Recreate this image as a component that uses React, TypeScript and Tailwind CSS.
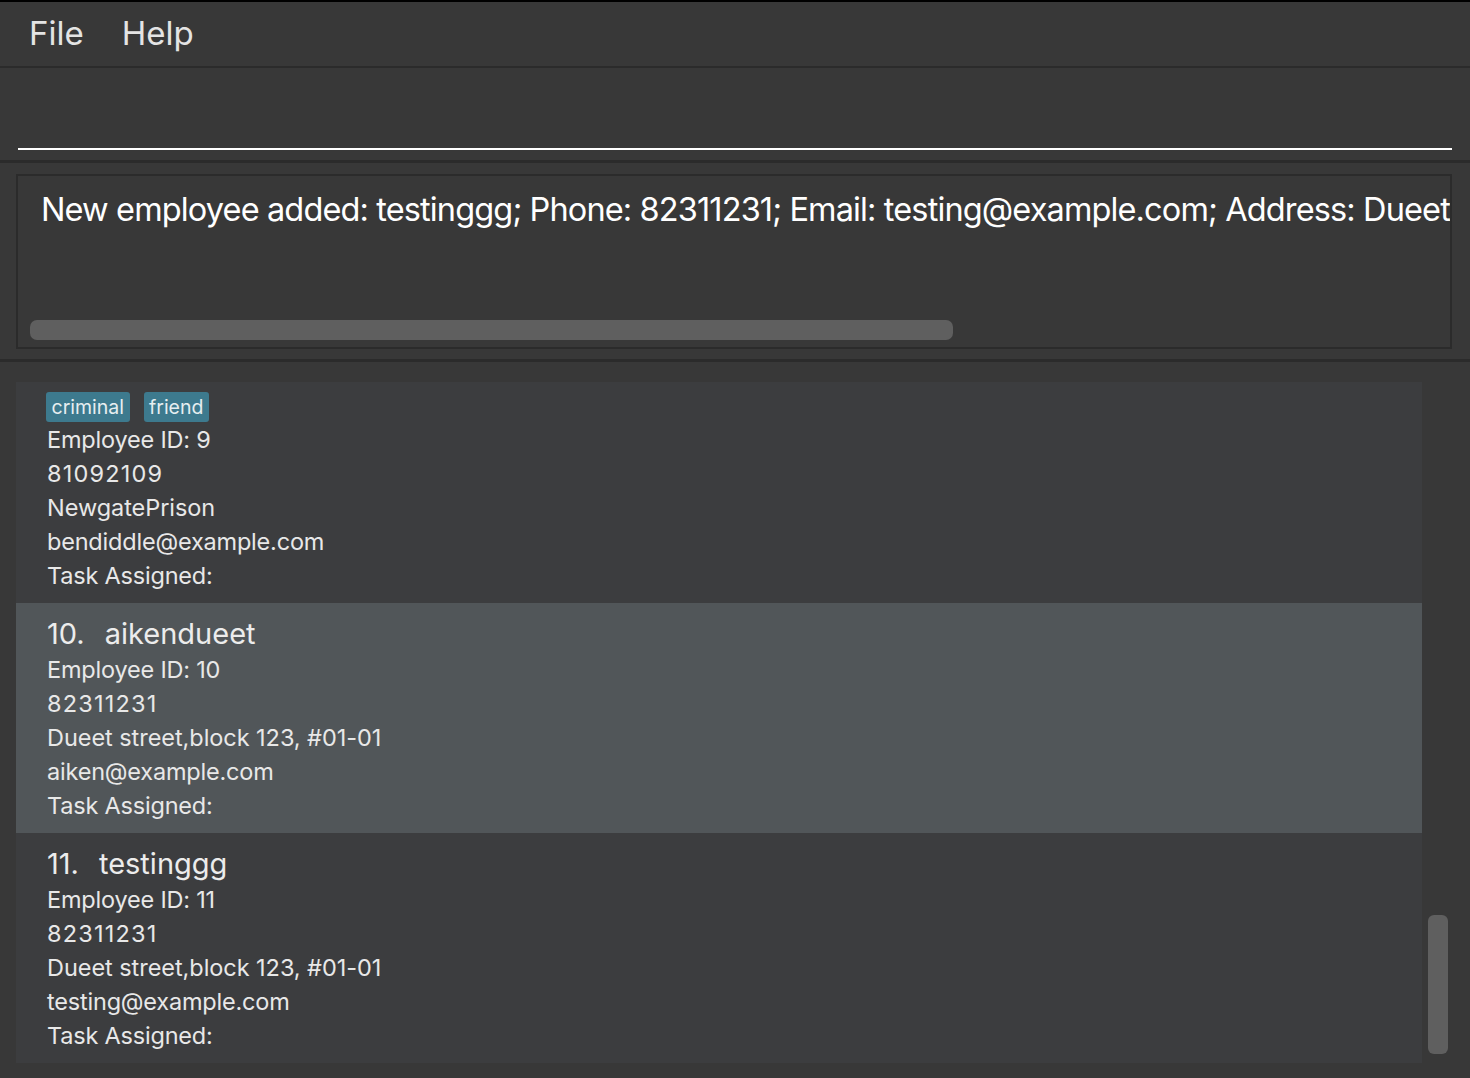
type Employee = {
  index: number;
  name: string;
  id: number;
  phone: string;
  address: string;
  email: string;
  tags?: string[];
  selected?: boolean;
};

const employees: Employee[] = [
  {
    index: 9,
    name: "bendiddle",
    id: 9,
    phone: "81092109",
    address: "NewgatePrison",
    email: "bendiddle@example.com",
    tags: ["criminal", "friend"],
  },
  {
    index: 10,
    name: "aikendueet",
    id: 10,
    phone: "82311231",
    address: "Dueet street,block 123, #01-01",
    email: "aiken@example.com",
    selected: true,
  },
  {
    index: 11,
    name: "testinggg",
    id: 11,
    phone: "82311231",
    address: "Dueet street,block 123, #01-01",
    email: "testing@example.com",
  },
];

function EmployeeCard({ employee }: { employee: Employee }) {
  return (
    <div
      className={
        employee.selected
          ? "bg-[#515659] pt-[12px] pb-[10px] pl-[31px]"
          : "bg-[#3c3d3f] pt-[12px] pb-[10px] pl-[31px]"
      }
    >
      <div className="flex gap-[20px] text-[29px] leading-[38px] text-[#ececec]">
        <span>{employee.index}.</span>
        <span>{employee.name}</span>
      </div>
      {employee.tags && (
        <div className="flex h-[34px] items-start gap-[14px] pt-[3px] -ml-[1px]">
          {employee.tags.map((tag) => (
            <span
              key={tag}
              className="h-[30px] rounded-[3px] bg-[#3d7a8e] px-[5.5px] text-[19.5px] leading-[30px] text-[#e6eef0]"
            >
              {tag}
            </span>
          ))}
        </div>
      )}
      <div className="text-[23.5px] leading-[34px] text-[#e8e8e8] tracking-[-0.2px]">
        <div>Employee ID: {employee.id}</div>
        <div className="tracking-[1.2px]">{employee.phone}</div>
        <div className="tracking-[-0.05px]">{employee.address}</div>
        <div>{employee.email}</div>
        <div>Task Assigned:</div>
      </div>
    </div>
  );
}

export default function App() {
  return (
    <div
      className="flex h-[1078px] w-[1470px] flex-col overflow-hidden border-t-2 border-black bg-[#383838]"
      style={{ fontFamily: "Inter, 'Noto Sans', sans-serif" }}
    >
      {/* MENU */}
      <div className="flex h-[64px] items-center gap-[38px] px-[29px] text-[33px] text-[#e4e4e4]">
        <span>File</span>
        <span>Help</span>
      </div>
      <div className="h-[2px] bg-[#2b2b2b]" />

      {/* COMMAND BOX */}
      <div className="flex h-[92px] flex-col justify-end px-[18px] pb-[10px]">
        <div className="h-[2px] bg-white" />
      </div>
      <div className="h-[3px] bg-[#2b2b2b]" />

      {/* RESULT DISPLAY */}
      <div className="h-[197px] pt-[11px] pl-[16px] pr-[18px]">
        <div className="flex h-[175px] flex-col overflow-hidden border-2 border-[#2b2b2b]">
          <div className="whitespace-nowrap pl-[23px] pt-[12px] text-[32.5px] leading-[44px] text-white tracking-[-0.87px]">
            New employee added: testinggg; Phone: 82311231; Email: testing@example.com; Address: Dueet
          </div>
          <div className="mt-auto mb-[7px] ml-[12px] h-[20px] w-[923px] rounded-[7px] bg-[#5f5f5f]" />
        </div>
      </div>
      <div className="h-[3px] bg-[#2b2b2b]" />

      {/* EMPLOYEE LIST */}
      <div className="flex flex-1 pl-[16px] pt-[20px] pb-[15px]">
        <div className="w-[1406px] overflow-hidden">
          <div className="-mt-[43px]">
            {employees.map((employee) => (
              <EmployeeCard key={employee.id} employee={employee} />
            ))}
          </div>
        </div>
        <div className="flex-1">
          <div className="ml-[6px] mt-[533px] h-[139px] w-[20px] rounded-[6px] bg-[#5f5f5f]" />
        </div>
      </div>
    </div>
  );
}
